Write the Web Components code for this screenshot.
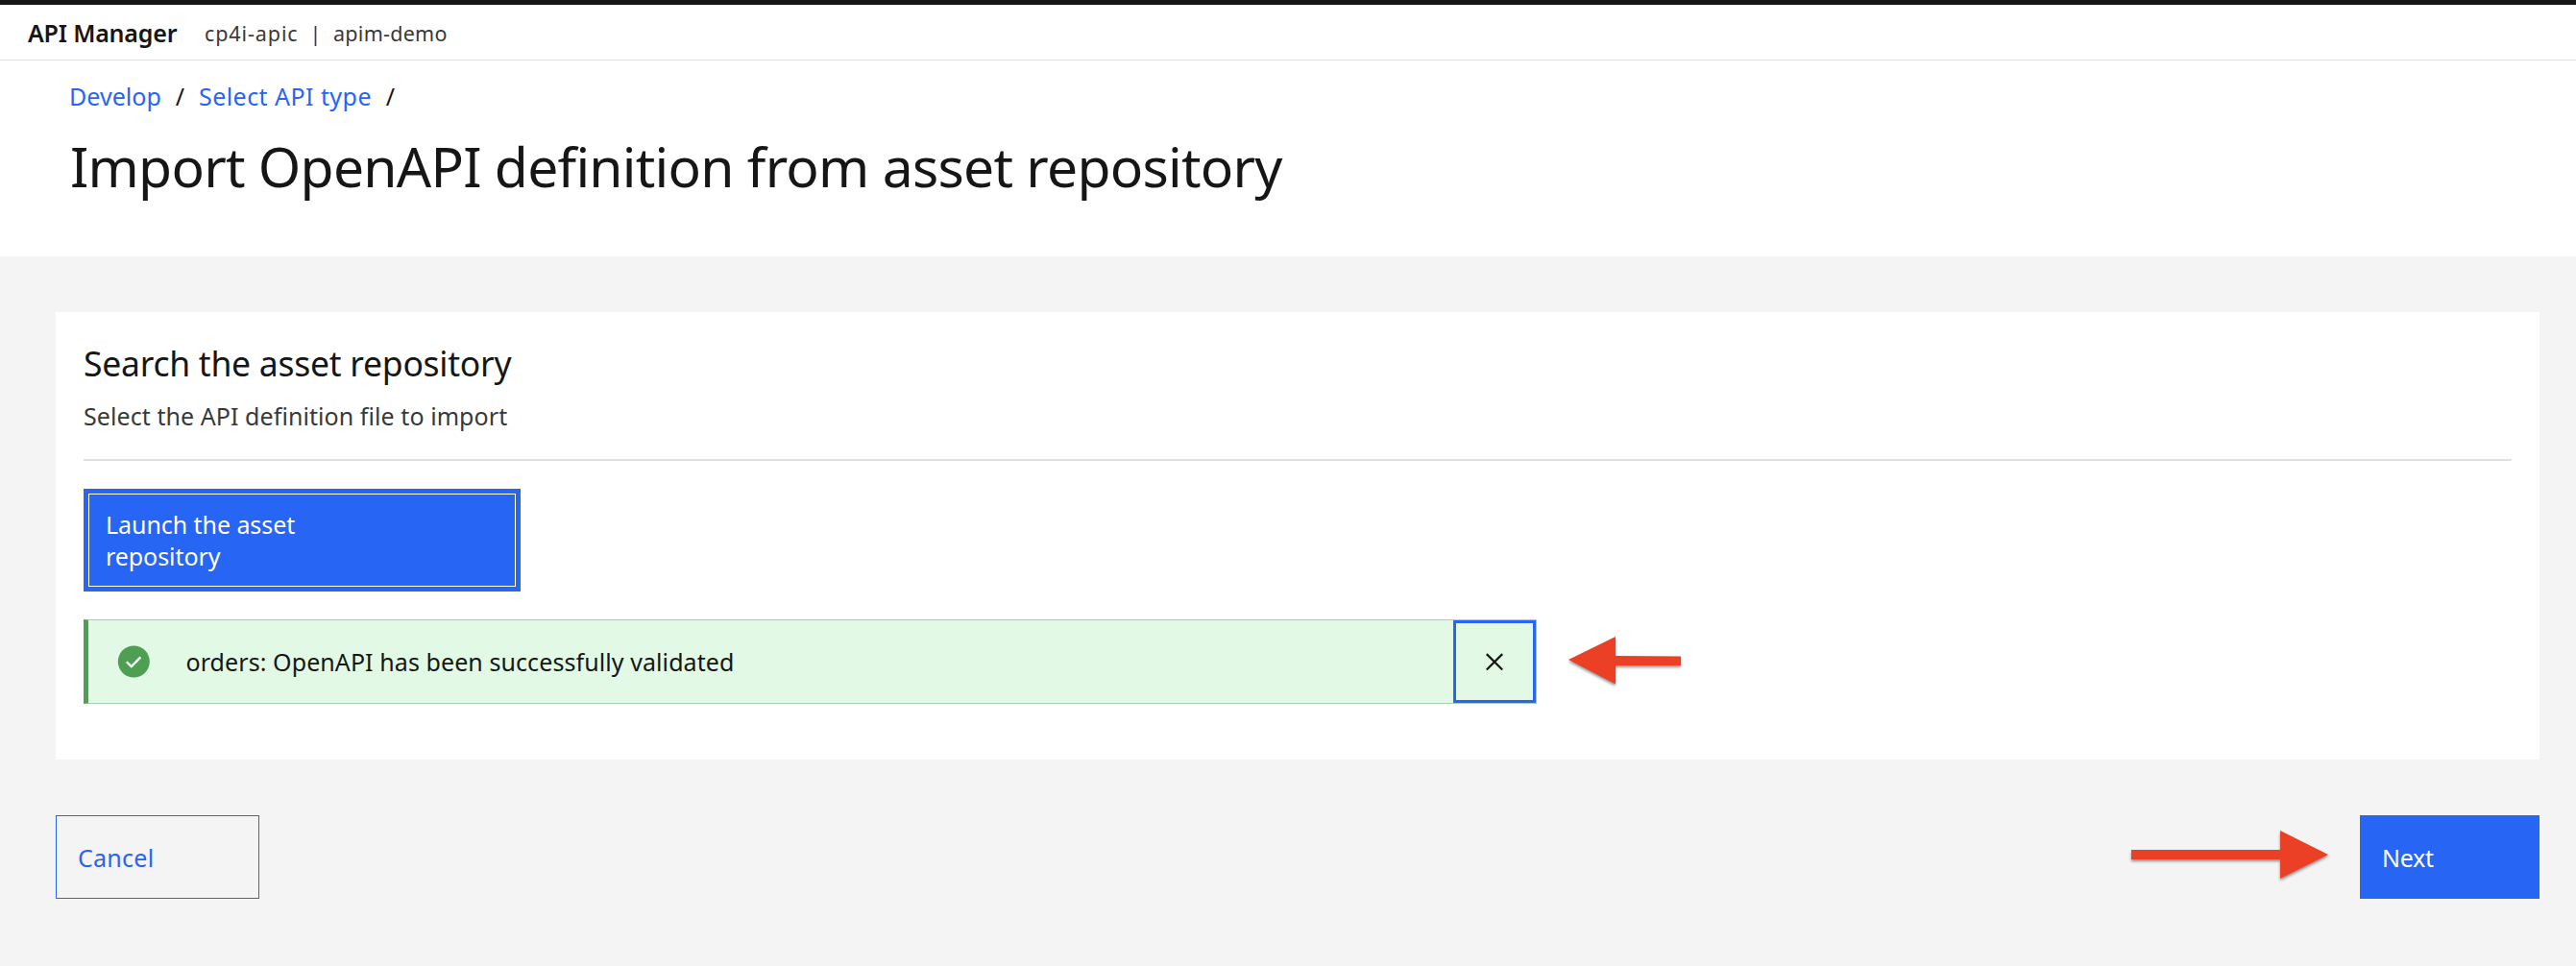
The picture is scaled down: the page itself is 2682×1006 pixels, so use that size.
<!DOCTYPE html>
<html lang="en">
<head>
<meta charset="utf-8">
<title>API Manager</title>
<style>
html, body { margin: 0; padding: 0; }
body { background: #f4f4f4; color: #161616; font: 400 25px/33px "Noto Sans", "Open Sans", sans-serif; }
</style>
</head>
<body>
<import-page></import-page>
<script>
const define = (name, html) => {
  const template = document.createElement('template');
  template.innerHTML = html;
  customElements.define(name, class extends HTMLElement {
    constructor() {
      super();
      this.attachShadow({ mode: 'open' }).append(template.content.cloneNode(true));
    }
  });
};

define('app-header', `
<style>
:host { display: flex; align-items: center; box-sizing: border-box; height: 63px; padding: 1px 0 0 29px; background: #fff; border-top: 5px solid #161616; border-bottom: 1px solid #e0e0e0; white-space: nowrap; }
.name { width: 184px; font-weight: 600; letter-spacing: -.2px; }
.org, .sep, .space { font-size: 21.5px; color: #393939; }
.org { width: 104px; letter-spacing: .9px; }
.sep { width: 23px; text-align: center; }
.space { margin-left: 7px; letter-spacing: .27px; }
</style>
<span class="name"><slot name="name"></slot></span>
<span class="org"><slot name="org"></slot></span>
<span class="sep">|</span>
<span class="space"><slot name="space"></slot></span>`);

define('page-head', `
<style>
:host { display: block; box-sizing: border-box; height: 204px; padding: 21px 0 0 72px; background: #fff; }
nav { display: flex; white-space: nowrap; }
h1 { margin: 22px 0 0 1px; font: 400 57px/68px "Noto Sans", "Open Sans", sans-serif; letter-spacing: -.75px; white-space: nowrap; }
</style>
<nav><slot name="crumbs"></slot></nav>
<h1><slot></slot></h1>`);

define('crumb-link', `
<style>
:host { display: flex; }
a { color: #2765f5; letter-spacing: var(--track, 0); }
i { width: 39px; text-align: center; font-style: normal; }
</style>
<a><slot></slot></a><i>/</i>`);

define('content-card', `
<style>
:host { display: block; box-sizing: border-box; height: 466px; margin: 58px 38px 0 58px; padding: 29px 29px 0; background: #fff; white-space: nowrap; }
h2 { margin: 0; font: 400 35.5px/48px "Noto Sans", "Open Sans", sans-serif; letter-spacing: -.25px; }
p { margin: 15px 0 28px; color: #393939; letter-spacing: .07px; }
hr { height: 2px; margin: 0 0 29px; border: 0; background: #e0e0e0; }
</style>
<h2><slot name="title"></slot></h2>
<p><slot name="hint"></slot></p>
<hr>
<slot></slot>`);

define('launch-button', `
<style>
:host { display: block; box-sizing: border-box; width: 455px; height: 107px; padding: 5px; background: #2765f5; color: #fff; }
button { display: block; box-sizing: border-box; width: 100%; height: 100%; margin: 0; padding: 15px 200px 0 17px; border: 1px solid #fff; border-radius: 0; background: none; color: inherit; font: inherit; text-align: left; letter-spacing: -.06px; }
span { display: block; height: 80px; }
</style>
<button><span><slot></slot></span></button>`);

define('success-note', `
<style>
:host { display: flex; align-items: center; box-sizing: border-box; width: 1513px; height: 88px; margin-top: 29px; background: #e2f9e5; border: 1px solid #a3d3ab; border-left: 5px solid #4f9f53; }
.ok { flex: none; width: 34px; height: 34px; margin-left: 30px; }
.text { flex: 1; margin-left: 37.5px; letter-spacing: .081px; }
.close { display: flex; align-items: center; justify-content: center; box-sizing: border-box; width: 86px; height: 86px; border: 3px solid #2765f5; }
</style>
<svg class="ok" viewBox="0 0 34 34"><circle cx="17.3" cy="17" r="16.5" fill="#4f9f53"/><path d="M9.8 17.2l5 4.9 9.6-9.7" fill="none" stroke="#fff" stroke-width="2.3"/></svg>
<span class="text"><slot></slot></span>
<span class="close"><svg width="20" height="20" viewBox="0 0 20 20"><path d="M1.8 2.1l16.4 16.4M18.2 2.1L1.8 18.5" stroke="#161616" stroke-width="2.2" fill="none"/></svg></span>`);

define('action-button', `
<style>
:host { display: block; }
button { display: block; box-sizing: border-box; width: var(--w); height: 87px; margin: 0; padding: 1px 0 0 22px; border: 1px solid #2765f5; border-radius: 0; background: var(--fill, transparent); color: var(--ink, #2765f5); font: inherit; letter-spacing: var(--track, 0); text-align: left; }
</style>
<button><slot></slot></button>`);

define('action-bar', `
<style>
:host { display: flex; justify-content: space-between; margin: 58px 38px 0 58px; }
</style>
<slot></slot>`);

customElements.define('callout-arrow', class extends HTMLElement {
  connectedCallback() {
    const length = Number(this.getAttribute('length'));
    const left = this.hasAttribute('left');
    const points = left
      ? `0,24 49,0 49,20 ${length},20.5 ${length},30 49,30 49,49.5`
      : `0,20 ${length - 50},20 ${length - 50},0 ${length},25 ${length - 50},50 ${length - 50},30 0,30`;
    this.attachShadow({ mode: 'open' }).innerHTML = `
<style>
:host { display: block; position: absolute; }
svg { display: block; overflow: visible; filter: drop-shadow(0 2px 1.5px rgba(0,0,0,.42)); }
</style>
<svg width="${length}" height="50"><polygon points="${points}" fill="#eb4026"/></svg>`;
  }
});

define('import-page', `
<style>
:host { display: block; position: relative; height: 1006px; overflow: hidden; background: #f4f4f4; }
.first { --track: .05px; }
.second { --track: .45px; }
.cancel { --w: 212px; --track: .25px; }
.next { --w: 187px; --fill: #2765f5; --ink: #fff; --track: -.275px; }
.to-note { left: 1633px; top: 663px; }
.to-next { left: 2219px; top: 865px; }
</style>
<app-header><span slot="name">API Manager</span><span slot="org">cp4i-apic</span><span slot="space">apim-demo</span></app-header>
<page-head>
  <crumb-link slot="crumbs" class="first">Develop</crumb-link><crumb-link slot="crumbs" class="second">Select API type</crumb-link>
  Import OpenAPI definition from asset repository
</page-head>
<content-card>
  <span slot="title">Search the asset repository</span>
  <span slot="hint">Select the API definition file to import</span>
  <launch-button>Launch the asset<br>repository</launch-button>
  <success-note>orders: OpenAPI has been successfully validated</success-note>
</content-card>
<action-bar>
  <action-button class="cancel">Cancel</action-button>
  <action-button class="next">Next</action-button>
</action-bar>
<callout-arrow class="to-note" left length="117"></callout-arrow>
<callout-arrow class="to-next" length="205"></callout-arrow>`);
</script>
</body>
</html>
